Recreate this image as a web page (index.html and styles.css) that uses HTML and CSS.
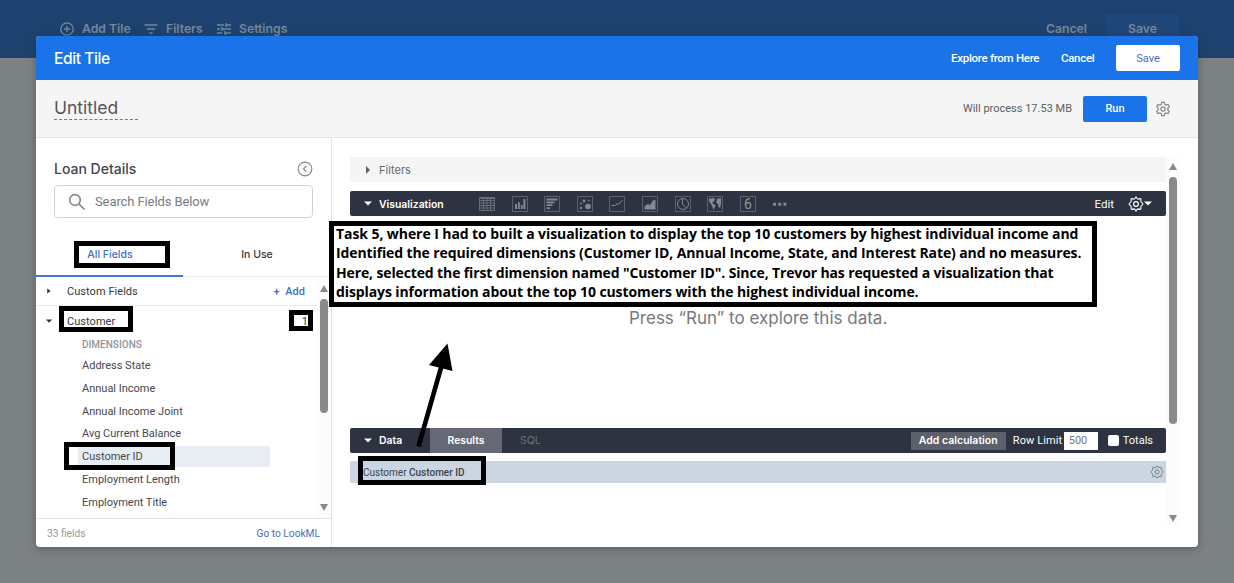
FILE: index.html
```html
<!DOCTYPE html>
<html lang="en">
<head>
<meta charset="utf-8">
<title>Edit Tile</title>
<link rel="stylesheet" href="styles.css">
</head>
<body>
<svg class="defs" width="0" height="0" aria-hidden="true">
  <symbol id="gear" viewBox="0 0 24 24"><path d="M10 2h4l.6 3 2 1.100 2.900-1 2 3.500-2.300 2v2.800l2.300 2-2 3.500-2.900-1-2 1.100-.6 3h-4l-.6-3-2-1.100-2.900 1-2-3.500 2.300-2v-2.800l-2.300-2 2-3.500 2.900 1 2-1.100z"/><circle cx="12" cy="12" r="3.300"/></symbol>
  <symbol id="cog" viewBox="0 0 24 24"><path d="M12 1.500Q14 4.800 15 4.700Q19 3.300 19.400 4.600Q19 8 19.600 8.800Q22.500 11 22.500 12Q22.300 13 19.600 15.200Q19 16 19.400 19.400Q19 20.700 15 19.300Q14 19.200 12 22.500Q10 19.200 9 19.300Q5 20.700 4.600 19.400Q5 16 4.400 15.200Q1.500 13 1.500 12Q1.700 11 4.400 8.800Q5 8 4.600 4.600Q5 3.300 9 4.700Q10 4.800 12 1.500z"/><circle cx="12" cy="12" r="3.600"/></symbol>
</svg>
<header class="topbar">
  <svg class="i-add" viewBox="0 0 14 14"><circle cx="7" cy="7" r="6.200"/><path d="M7 4v6M4 7h6"/></svg>
  <span class="t-add">Add Tile</span>
  <svg class="i-filter" viewBox="0 0 14 14"><path d="M.5 3h13M3 7h8M5.500 11h3"/></svg>
  <span class="t-filters">Filters</span>
  <svg class="i-tune" viewBox="0 0 14 14"><path d="M0 3h7M9 3h5M9 1v4M0 7h3M5 7h9M5 5v4M0 11h5M7 11h7M8 9v4"/></svg>
  <span class="t-settings">Settings</span>
  <span class="t-cancel">Cancel</span>
  <span class="bg-save">Save</span>
</header>

<main class="modal">
  <div class="modal-head">
    <h1>Edit Tile</h1>
    <span class="explore">Explore from Here</span>
    <span class="cancel">Cancel</span>
    <button class="save">Save</button>
  </div>
  <div class="title-row">
    <div class="untitled">Untitled</div>
    <span class="process">Will process 17.53 MB</span>
    <button class="run">Run</button>
    <svg class="gear"><use href="#gear"/></svg>
  </div>
  <div class="content">
    <aside class="side">
      <div class="side-title"><h2>Loan Details</h2>
        <svg viewBox="0 0 16 16"><circle cx="8" cy="8" r="6.800"/><path d="M9.300 5L6.500 8l2.800 3"/></svg>
      </div>
      <div class="search">
        <svg viewBox="0 0 18 18"><circle cx="7" cy="7" r="5.300"/><path d="M11 11l5.500 5.500"/></svg>
        <span>Search Fields Below</span>
      </div>
      <div class="tabs"><div class="tab on"><span>All Fields</span></div><div class="tab"><span>In Use</span></div></div>
      <div class="fields">
        <div class="list">
          <div class="group"><svg viewBox="0 0 6 6"><path d="M1.200 .4L4.600 3 1.200 5.600z"/></svg><span class="custom">Custom Fields</span><span class="add">+&nbsp; Add</span></div>
          <div class="group open"><svg viewBox="0 0 6 6"><path d="M0 1.500h6L3 4.700z"/></svg><span class="customer">Customer</span><span class="count">1</span></div>
          <div class="dims">DIMENSIONS</div>
          <div class="item">Address State</div>
          <div class="item">Annual Income</div>
          <div class="item">Annual Income Joint</div>
          <div class="item">Avg Current Balance</div>
          <div class="item picked">Customer ID</div>
          <div class="item">Employment Length</div>
          <div class="item">Employment Title</div>
        </div>
        <div class="scroll"><i class="up"></i><i class="thumb"></i><i class="down"></i></div>
      </div>
      <div class="side-foot"><span class="total">33 fields</span><span class="lookml">Go to LookML</span></div>
    </aside>
    <section class="explore-pane">
      <div class="panels">
        <div class="filters-bar"><svg viewBox="0 0 6 8"><path d="M1 0l4 4-4 4z"/></svg><span>Filters</span></div>
        <div class="dark vis">
          <svg class="caret" viewBox="0 0 8 5"><path d="M0 .5h8L4 4.500z"/></svg><b>Visualization</b>
          <div class="icons">
            <svg viewBox="0 0 16 16"><path d="M.5 1.500h15v13H.5zM.5 4.500h15M.5 7h15M.5 9.500h15M.5 12h15M4.500 2v12.500M8 2v12.500M11.500 2v12.500M1 2.500h14"/></svg>
            <svg viewBox="0 0 16 16"><path class="frame" d="M.5.5h15v15H.5z"/><path class="fill" d="M3 8h2v5H3zM6 6h1.800v7H6zM8.800 9h1.800v4H8.800zM11.400 3h2v10h-2z"/></svg>
            <svg viewBox="0 0 16 16"><path class="frame" d="M.5.5h15v15H.5z"/><path class="fill" d="M2.500 2.500h11v2h-11zM2.500 5.500h8v1.800h-8zM2.500 8.300h6v1.800h-6zM2.500 11.200h3.500v1.800h-3.500z"/></svg>
            <svg viewBox="0 0 16 16"><path class="frame" d="M.5.5h15v15H.5z"/><circle class="fill" cx="11" cy="10.500" r="2.800"/><circle class="fill" cx="7" cy="5" r="1.400"/><circle class="fill" cx="4" cy="7.500" r="1"/><circle class="fill" cx="4" cy="12" r="1.200"/><circle class="fill" cx="12" cy="4.500" r=".8"/></svg>
            <svg viewBox="0 0 16 16"><path class="frame" d="M.5.5h15v15H.5z"/><path class="line" d="M2.500 9.500h3.500l2-1.500h2l3.500-4"/></svg>
            <svg viewBox="0 0 16 16"><path class="frame" d="M.5.5h15v15H.5z"/><path class="fill" d="M2.500 10l3.500-2 2 1 3-4.500 2.500-1v10h-11z"/></svg>
            <svg viewBox="0 0 16 16"><path class="frame" d="M.5.5h15v15H.5z"/><circle class="line" cx="8" cy="8" r="5.500"/><path class="line" d="M7.500 2.500V8l4 4.200"/></svg>
            <svg viewBox="0 0 16 16"><path class="frame" d="M.5.5h15v15H.5z"/><path class="fill" d="M2 2.500l5-.5 1 2-2 2-1 1 2.500 1.500 1 1.500L6.500 14l-1-3L4 8 2 5.500zM9.500 3L14 2v6l-1 4-1.500-1-.5-3-2-1.500 1-2z"/></svg>
            <svg viewBox="0 0 16 16"><path class="frame" d="M.5.5h15v15H.5z"/><text x="8" y="12.800">6</text></svg>
            <svg viewBox="0 0 16 16"><path class="fill" d="M1 6.700h3v3H1zM6.200 6.700h3v3h-3zM11.400 6.700h3v3h-3z"/></svg>
          </div>
          <span class="edit">Edit</span><svg class="cog"><use href="#cog"/></svg><svg class="caret" viewBox="0 0 8 5"><path d="M0 .5h8L4 4.500z"/></svg>
        </div>
        <div class="canvas"><span>Press “Run” to explore this data.</span></div>
        <div class="dark data">
          <div class="data-label"><svg class="caret" viewBox="0 0 8 5"><path d="M0 .5h8L4 4.500z"/></svg><b>Data</b></div>
          <div class="results"><span>Results</span></div><span class="sql">SQL</span>
          <div class="calc"><span>Add calculation</span></div><span class="row-limit">Row Limit</span><span class="limit">500</span><i class="check"></i><span class="totals">Totals</span>
        </div>
        <div class="column"><span><span class="view">Customer </span><b>Customer ID</b></span><svg><use href="#cog"/></svg></div>
      </div>
      <div class="scroll main-scroll"><i class="up"></i><i class="thumb"></i><i class="down"></i></div>
    </section>
  </div>
</main>

<div class="mark m-all"></div>
<div class="mark m-customer"></div>
<div class="mark m-count"></div>
<div class="mark m-id"></div>
<div class="mark m-column"></div>
<svg class="arrow" viewBox="0 0 50 110"><path d="M8.500 106.500L31.500 26" stroke="#000" stroke-width="4.600"/><path d="M37.500 3.500L19 25l23.500 6z"/></svg>
<div class="note">
  <div class="n1">Task 5, where I had to built a visualization to display the top 10 customers by highest individual income and</div>
  <div class="n2">Identified the required dimensions (Customer ID, Annual Income, State, and Interest Rate) and no measures.</div>
  <div class="n3">Here, selected the first dimension named "Customer ID". Since, Trevor has requested a visualization that</div>
  <div class="n4">displays information about the top 10 customers with the highest individual income.</div>
</div>
</body>
</html>
```
FILE: styles.css
```css
* { box-sizing: border-box; }
body { margin: 0; width: 1234px; height: 583px; overflow: hidden; position: relative; background: #7c8183; font-family: Roboto, sans-serif; font-size: 11px; color: #33393d; white-space: nowrap; }
h1, h2, b { margin: 0; font-weight: 500; }
svg { display: block; flex: none; fill: none; stroke: currentColor; }
.defs { position: absolute; }
button { border: 0; padding: 0; font-family: Roboto, sans-serif; font-size: 11px; }

.topbar { height: 58px; background: #1e426f; color: #76889a; display: flex; padding: 14px 55px 0 60px; font: 600 12.200px/29px Inter, sans-serif; }
.topbar svg { width: 14px; height: 14px; margin-top: 8px; stroke-width: 1.300; }
.t-add { width: 62px; margin-left: 8px; }
.t-filters { width: 51px; margin-left: 8px; }
.t-settings { margin-left: 8px; }
.t-cancel { margin-left: auto; }
.bg-save { width: 73px; height: 30px; margin-left: 19px; background: #204779; text-align: center; }

.modal { position: absolute; left: 36px; top: 36px; width: 1162px; height: 511px; background: #fff; border-radius: 4px; overflow: hidden; box-shadow: 0 2px 9px rgba(30,35,40,.35); display: flex; flex-direction: column; }
.modal-head { height: 44px; background: #1a73e8; color: #fff; display: flex; align-items: center; padding: 0 18px; }
.modal-head h1 { font: 500 15.500px/20px Inter, sans-serif; letter-spacing: -.4px; padding-top: 1px; }
.explore { margin-left: auto; font-size: 11.500px; font-weight: 500; width: 110px; letter-spacing: -.28px; }
.modal-head .cancel { width: 55px; font-size: 11.500px; font-weight: 500; letter-spacing: -.3px; }
.save { width: 64px; height: 26px; border-radius: 2px; background: #fff; color: #3f70c5; }
.title-row { height: 58px; background: #f5f5f5; border-bottom: 1px solid #e2e4e6; display: flex; align-items: center; padding: 0 27px 0 18px; }
.untitled { width: 84px; height: 25px; margin-top: -2px; border-bottom: 1px dashed #4583c4; font: 400 17.500px/25px Inter, sans-serif; color: #55585b; }
.process { margin-left: auto; color: #5c6063; margin-right: 11px; }
.run { width: 64px; height: 26px; border-radius: 2px; background: #1a73e8; color: #fff; font-weight: 500; }
.gear { width: 16px; height: 16px; margin-left: 8px; color: #85898d; stroke-width: 1.800; }
.content { flex: 1; display: flex; min-height: 0; }

.side { width: 296px; border-right: 1px solid #e3e6e8; display: flex; flex-direction: column; }
.side-title { display: flex; justify-content: space-between; align-items: center; height: 22px; margin: 20px 18px 0; }
.side-title h2 { font: 500 14px/20px Inter, sans-serif; color: #40464b; }
.side-title svg { width: 16px; height: 16px; color: #858b90; stroke-width: 1.200; }
.search { margin: 5px 18px 0; height: 33px; border: 1px solid #d0d3d6; border-radius: 4px; display: flex; align-items: center; padding-left: 13px; font-size: 13px; letter-spacing: -.1px; color: #777b7f; }
.search svg { width: 18px; height: 18px; margin-right: 9px; stroke-width: 1.700; color: #85898d; }
.tabs { display: flex; margin-top: 16px; height: 43px; border-bottom: 1px solid #e5e8ea; font: 500 10.500px/42px Inter, sans-serif; text-align: center; }
.tab { width: 147px; height: 43px; padding-left: 1px; }
.tab.on { color: #3f70c5; border-bottom: 2px solid #3d79da; }
.fields { height: 241px; display: flex; }
.list { width: 281px; }
.group { height: 29px; border-bottom: 1px solid #e9ebed; display: flex; align-items: center; padding-left: 10px; letter-spacing: .05px; }
.group svg { width: 6px; height: 6px; margin-right: 15px; fill: #333; stroke: none; }
.group .add { margin-left: auto; margin-right: 12px; color: #3f70c5; font-weight: 500; }
.group.open { border: 0; height: 30px; }
.count { margin-left: auto; margin-right: 9px; }
.dims { height: 19px; line-height: 17px; padding-left: 46px; font-size: 10px; font-weight: 500; color: #91979b; }
.item { height: 21px; line-height: 21px; margin: 0 47px 1.750px 42px; padding-left: 4px; border-radius: 3px; color: #43494d; }
.picked { background: #e8edf4; }
.scroll { width: 14px; display: flex; flex-direction: column; align-items: center; background: #fcfcfc; }
.up, .down { border: 4px solid transparent; border-top: 0; border-bottom: 7px solid #8a8a8a; }
.down { border-bottom: 0; border-top: 7px solid #8a8a8a; margin-top: auto; }
.thumb { width: 8px; border-radius: 4px; background: #8a8a8a; }
.fields .up { margin-top: 8px; }
.fields .thumb { margin-top: 7px; height: 114px; }
.fields .down { margin-bottom: 7px; }
.side-foot { flex: 1; border-top: 1px solid #e3e6e8; display: flex; align-items: center; justify-content: space-between; padding: 0 11px; font-size: 10.200px; color: #959a9f; }
.lookml { color: #3f70c5; }

.explore-pane { flex: 1; display: flex; padding: 19px 18px 22px 18px; }
.panels { width: 816px; }
.filters-bar { height: 25px; background: #f5f5f5; display: flex; align-items: center; padding-left: 15px; font: 400 11px/25px Inter, sans-serif; color: #66696c; }
.filters-bar span { padding-top: 1px; }
.filters-bar svg { width: 6px; height: 8px; margin-right: 8px; fill: #5d6062; stroke: none; }
.dark { height: 25px; background: #2d3340; color: #fff; border-radius: 2px; display: flex; align-items: center; }
.dark b, .results { font: 600 10.400px/25px Inter, sans-serif; }
.caret { width: 8px; height: 5px; fill: #fff; stroke: none; }
.vis { margin-top: 9px; padding-left: 14px; }
.vis b { width: 100px; margin-left: 7px; padding-top: 1px; }
.icons { display: flex; gap: 16.600px; color: #686d78; }
.icons svg { width: 16px; height: 16px; }
.icons .fill { fill: #858993; stroke: none; }
.icons .line { stroke: #858993; }
.icons .frame { stroke: #5c616c; }
.icons text { font: 14px Roboto, sans-serif; fill: #9296a0; stroke: none; text-anchor: middle; }
.vis .edit { margin-left: auto; margin-right: 14px; font-size: 11.500px; }
.cog { width: 16px; height: 16px; stroke-width: 1.700; }
.vis .cog + .caret { margin-right: 14px; }
.canvas { height: 212px; padding-top: 90px; padding-left: 279px; font: 400 17px/24px Inter, sans-serif; color: #77797c; }
.data-label { width: 80px; padding-left: 14px; display: flex; align-items: center; }
.data-label b { margin-left: 7px; }
.results { width: 72px; height: 25px; background: #656975; text-align: center; }
.sql { margin-left: 18px; font: 10.500px/25px Inter, sans-serif; color: #6e737d; }
.calc { margin-left: auto; width: 95px; height: 18px; text-align: center; background: #5b606b; font: 600 10.500px/18px Inter, sans-serif; }
.row-limit { margin-left: 7px; width: 51px; letter-spacing: .1px; }
.limit { width: 34px; height: 18px; background: #fff; color: #777; line-height: 18px; padding-left: 5px; }
.check { width: 11px; height: 11px; border-radius: 2px; background: #fff; margin-left: 10px; margin-right: 4px; }
.totals { margin-right: 13px; }
.column { margin-top: 8px; height: 22px; background: #cbd6e2; display: flex; align-items: center; justify-content: space-between; padding: 0 2px 0 13px; font-size: 10px; color: #39434e; }
.column svg { width: 14px; height: 14px; stroke-width: 1.500; color: #66717c; }
.main-scroll { margin-top: 0; }
.main-scroll .up { margin-top: 6px; }
.main-scroll .thumb { margin-top: 7px; height: 247px; }
.main-scroll .down { margin-bottom: 3px; }

.mark { position: absolute; border: 5px solid #000; }
.m-all { left: 74px; top: 241px; width: 96px; height: 27px; }
.m-customer { left: 59px; top: 306px; width: 74px; height: 26px; }
.m-count { left: 289px; top: 310px; width: 24px; height: 21px; }
.m-id { left: 64px; top: 442px; width: 111px; height: 28px; }
.m-column { left: 358px; top: 456px; width: 128px; height: 29px; }
.arrow { position: absolute; left: 410px; top: 340px; width: 50px; height: 110px; fill: #000; stroke: none; }
.note { position: absolute; left: 329px; top: 221px; width: 768px; height: 86px; border: 5px solid #000; background: #fff; color: #000; padding: 0 2px; font: 700 14px/19.300px "Open Sans", sans-serif; }
.note div { margin-top: -2px; margin-bottom: 2px; }
.n1 { letter-spacing: -.075px; }
.n2 { letter-spacing: -.115px; }
.n3 { letter-spacing: -.13px; }
.n4 { letter-spacing: -.1px; }
```
